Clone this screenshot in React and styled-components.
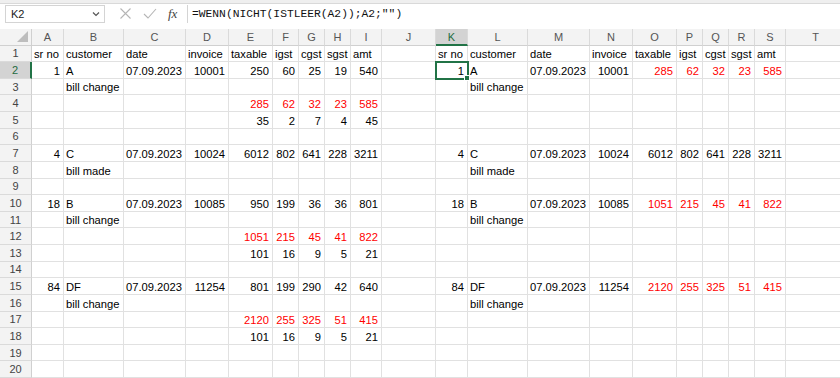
import React from "react";
import styled, { createGlobalStyle } from "styled-components";

const Global = createGlobalStyle`
  html, body { margin: 0; padding: 0; background: #fff; }
  body { width: 840px; height: 378px; overflow: hidden; font-family: "Liberation Sans", Arial, sans-serif; }
`;

const Page = styled.div`
  width: 840px;
  height: 378px;
  overflow: hidden;
  display: flex;
  flex-direction: column;
`;

const TopStrip = styled.div`
  height: 4px;
  background: #efefef;
  border-bottom: 1px solid #d9d9d9;
`;

const FormulaBar = styled.div`
  height: 21px;
  display: flex;
  align-items: center;
  padding: 1px 0 2px 5px;
  box-sizing: border-box;
`;

const NameBox = styled.div`
  width: 100px;
  height: 18px;
  border: 1px solid #d4d4d4;
  display: flex;
  align-items: center;
  justify-content: space-between;
  padding: 0 4px 0 5px;
  box-sizing: border-box;
  font-size: 11px;
  color: #222;
`;

const IconGroup = styled.div`
  width: 74px;
  margin-left: 8px;
  height: 17px;
  display: flex;
  align-items: center;
  gap: 11px;
  padding-left: 6px;
  box-sizing: border-box;
`;

const Fx = styled.span`
  font-family: "Liberation Serif", serif;
  font-style: italic;
  font-size: 13px;
  color: #444;
`;

const FormulaInput = styled.div`
  flex: 1;
  height: 18px;
  border-left: 1px solid #d4d4d4;
  display: flex;
  align-items: center;
  padding-left: 4px;
  font-family: "Liberation Mono", monospace;
  font-size: 11.3px;
  color: #111;
  white-space: pre;
`;

const Sheet = styled.div`
  margin-top: 4px;
  display: grid;
  grid-template-columns: ${(p) => p.$cols};
  grid-template-rows: 17px repeat(20, 16.63px);
  font-size: 11.2px;
`;

const Corner = styled.div`
  background: #f3f3f3;
  border-right: 1px solid #d0d0d0;
  border-bottom: 1px solid #d0d0d0;
  position: relative;
  &::after {
    content: "";
    position: absolute;
    right: 3px;
    bottom: 3px;
    border-style: solid;
    border-width: 0 0 11px 11px;
    border-color: transparent transparent #bdbdbd transparent;
  }
`;

const ColHeader = styled.div`
  background: ${(p) => (p.$active ? "#d3d3d3" : "#f3f3f3")};
  color: ${(p) => (p.$active ? "#1e6b41" : "#555")};
  border-right: 1px solid #dadada;
  border-bottom: ${(p) => (p.$active ? "2px solid #217346" : "1px solid #d0d0d0")};
  display: flex;
  align-items: center;
  justify-content: center;
  font-size: 11px;
  padding-top: 1px;
  box-sizing: border-box;
`;

const RowHeader = styled.div`
  background: ${(p) => (p.$active ? "#d3d3d3" : "#f3f3f3")};
  color: ${(p) => (p.$active ? "#1e6b41" : "#444")};
  border-right: ${(p) => (p.$active ? "2px solid #217346" : "1px solid #d0d0d0")};
  border-bottom: 1px solid #dadada;
  display: flex;
  align-items: center;
  justify-content: center;
  font-size: 11px;
  box-sizing: border-box;
`;

const Cell = styled.div`
  border-right: 1px solid #e1e1e1;
  border-bottom: 1px solid #e1e1e1;
  display: flex;
  align-items: flex-end;
  justify-content: ${(p) => (p.$right ? "flex-end" : "flex-start")};
  padding: 0 3px 0 2px;
  box-sizing: border-box;
  color: ${(p) => (p.$red ? "#ff0000" : "#000")};
  white-space: nowrap;
  overflow: visible;
  position: relative;
  line-height: 14px;
  ${(p) =>
    p.$selected &&
    `
    outline: 2px solid #217346;
    outline-offset: -1px;
    z-index: 2;
    &::after {
      content: "";
      position: absolute;
      right: -3px;
      bottom: -3px;
      width: 4px;
      height: 4px;
      background: #217346;
      border: 1px solid #fff;
    }
  `}
`;

const cols = [
  ["A", 32], ["B", 60], ["C", 62], ["D", 43], ["E", 44], ["F", 26], ["G", 26], ["H", 26], ["I", 31], ["J", 54],
  ["K", 32], ["L", 60], ["M", 62], ["N", 43], ["O", 44], ["P", 26], ["Q", 26], ["R", 26], ["S", 31], ["T", 60],
];

const R = (v) => ({ v, red: true });
const hdr = ["sr no", "customer", "date", "invoice", "taxable", "igst", "cgst", "sgst", "amt"];
const at = (entries) => {
  const row = Array(20).fill("");
  Object.entries(entries).forEach(([i, v]) => (row[+i] = v));
  return row;
};
const put = (start, arr) => Object.fromEntries(arr.map((v, i) => [start + i, v]));

const data = {
  1: at({ ...put(0, hdr), ...put(10, hdr) }),
  2: at({ ...put(0, [1, "A", "07.09.2023", 10001, 250, 60, 25, 19, 540]), ...put(10, [1, "A", "07.09.2023", 10001, R(285), R(62), R(32), R(23), R(585)]) }),
  3: at({ 1: "bill change", 11: "bill change" }),
  4: at(put(4, [R(285), R(62), R(32), R(23), R(585)])),
  5: at(put(4, [35, 2, 7, 4, 45])),
  7: at({ ...put(0, [4, "C", "07.09.2023", 10024, 6012, 802, 641, 228, 3211]), ...put(10, [4, "C", "07.09.2023", 10024, 6012, 802, 641, 228, 3211]) }),
  8: at({ 1: "bill made", 11: "bill made" }),
  10: at({ ...put(0, [18, "B", "07.09.2023", 10085, 950, 199, 36, 36, 801]), ...put(10, [18, "B", "07.09.2023", 10085, R(1051), R(215), R(45), R(41), R(822)]) }),
  11: at({ 1: "bill change", 11: "bill change" }),
  12: at(put(4, [R(1051), R(215), R(45), R(41), R(822)])),
  13: at(put(4, [101, 16, 9, 5, 21])),
  15: at({ ...put(0, [84, "DF", "07.09.2023", 11254, 801, 199, 290, 42, 640]), ...put(10, [84, "DF", "07.09.2023", 11254, R(2120), R(255), R(325), R(51), R(415)]) }),
  16: at({ 1: "bill change", 11: "bill change" }),
  17: at(put(4, [R(2120), R(255), R(325), R(51), R(415)])),
  18: at(put(4, [101, 16, 9, 5, 21])),
};

const isRight = (v) => typeof v === "number" || /^\d/.test(String(v));

const XIcon = () => (
  <svg width="13" height="13" viewBox="0 0 13 13" fill="none" stroke="#b5b5b5" strokeWidth="1.1">
    <path d="M1.5 1.5 L11.5 11.5 M11.5 1.5 L1.5 11.5" />
  </svg>
);
const CheckIcon = () => (
  <svg width="14" height="13" viewBox="0 0 14 13" fill="none" stroke="#b5b5b5" strokeWidth="1.1">
    <path d="M1 7 L5 11 L13 2" />
  </svg>
);
const Chevron = () => (
  <svg width="8" height="6" viewBox="0 0 8 6" fill="none" stroke="#555" strokeWidth="1.2">
    <path d="M1 1.5 L4 4.5 L7 1.5" />
  </svg>
);

export default function App() {
  const template = "32px " + cols.map(([, w]) => `${w}px`).join(" ");
  const rows = Array.from({ length: 20 }, (_, i) => i + 1);
  return (
    <Page>
      <Global />
      <TopStrip />
      <FormulaBar>
        <NameBox>
          <span>K2</span>
          <Chevron />
        </NameBox>
        <IconGroup>
          <XIcon />
          <CheckIcon />
          <Fx>fx</Fx>
        </IconGroup>
        <FormulaInput>{'=WENN(NICHT(ISTLEER(A2));A2;"")'}</FormulaInput>
      </FormulaBar>
      <Sheet $cols={template}>
        <Corner />
        {cols.map(([k]) => (
          <ColHeader key={k} $active={k === "K"}>
            {k}
          </ColHeader>
        ))}
        {rows.map((r) => (
          <React.Fragment key={r}>
            <RowHeader $active={r === 2}>{r}</RowHeader>
            {cols.map(([k], ci) => {
              const raw = data[r] ? data[r][ci] : "";
              const obj = raw && typeof raw === "object" ? raw : { v: raw };
              const v = obj.v;
              return (
                <Cell
                  key={k}
                  $right={v !== "" && isRight(v)}
                  $red={obj.red}
                  $selected={r === 2 && k === "K"}
                >
                  {v}
                </Cell>
              );
            })}
          </React.Fragment>
        ))}
      </Sheet>
    </Page>
  );
}
